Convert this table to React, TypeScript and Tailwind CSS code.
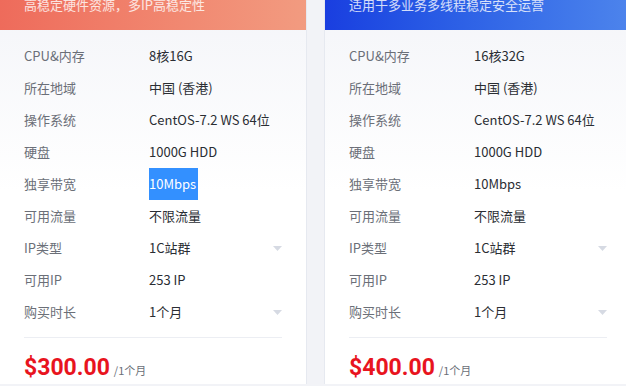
import React from "react";

interface Plan {
  tip: string;
  head: string;
  specs: { label: string; value: string; select?: boolean; picked?: boolean }[];
  price: string;
}

const plans: Plan[] = [
  {
    tip: "高稳定硬件资源，多IP高稳定性",
    head: "bg-gradient-to-r from-[#ee6b5b] to-[#f29b80]",
    price: "$300.00",
    specs: [
      { label: "CPU&内存", value: "8核16G" },
      { label: "所在地域", value: "中国 (香港)" },
      { label: "操作系统", value: "CentOS-7.2 WS 64位" },
      { label: "硬盘", value: "1000G HDD" },
      { label: "独享带宽", value: "10Mbps", picked: true },
      { label: "可用流量", value: "不限流量" },
      { label: "IP类型", value: "1C站群", select: true },
      { label: "可用IP", value: "253 IP" },
      { label: "购买时长", value: "1个月", select: true },
    ],
  },
  {
    tip: "适用于多业务多线程稳定安全运营",
    head: "bg-gradient-to-r from-[#1a3ee0] to-[#4d84ec]",
    price: "$400.00",
    specs: [
      { label: "CPU&内存", value: "16核32G" },
      { label: "所在地域", value: "中国 (香港)" },
      { label: "操作系统", value: "CentOS-7.2 WS 64位" },
      { label: "硬盘", value: "1000G HDD" },
      { label: "独享带宽", value: "10Mbps" },
      { label: "可用流量", value: "不限流量" },
      { label: "IP类型", value: "1C站群", select: true },
      { label: "可用IP", value: "253 IP" },
      { label: "购买时长", value: "1个月", select: true },
    ],
  },
];

function Caret() {
  return (
    <svg width="9" height="5" viewBox="0 0 9 5" className="fill-[#d6dae3]">
      <path d="M0 0h9L4.5 5z" />
    </svg>
  );
}

function Card({ plan }: { plan: Plan }) {
  return (
    <div className="w-[308px] shrink-0 border-x border-[#e6e9f0] bg-gradient-to-b from-[#f4f5f9] via-white to-white">
      <div className={`${plan.head} -mt-[10px] h-[40px] px-6 text-[13px] leading-[30px] text-white/80`}>
        {plan.tip}
      </div>
      <div className="px-6 pt-[10px]">
        {plan.specs.map((s) => (
          <div key={s.label} className="flex h-8 items-center text-[13px]">
            <span className="w-[125px] text-[#6b6f78]">{s.label}</span>
            <span className="flex-1 text-[#2a2d33]">
              {s.picked ? (
                <span className="inline-block h-8 bg-[#3390ff] pr-[2px] leading-8 text-white">{s.value}</span>
              ) : (
                s.value
              )}
            </span>
            {s.select && <Caret />}
          </div>
        ))}
        <div className="mt-[9px] border-t border-[#eceef3]" />
        <div className="flex items-baseline pt-[14px]">
          <span className="font-['Roboto'] text-[23px] font-bold leading-8 text-[#e8141e]">
            {plan.price}
          </span>
          <span className="ml-1 text-[11px] text-[#6b6f78]">/1个月</span>
        </div>
      </div>
    </div>
  );
}

export default function App() {
  return (
    <div className="h-[386px] w-[626px] overflow-hidden bg-[#f2f3f7] font-['Noto_Sans_CJK_SC','Noto_Sans',sans-serif]">
      <div className="flex gap-[17px] -ml-px">
        {plans.map((p) => (
          <Card key={p.price} plan={p} />
        ))}
      </div>
    </div>
  );
}
